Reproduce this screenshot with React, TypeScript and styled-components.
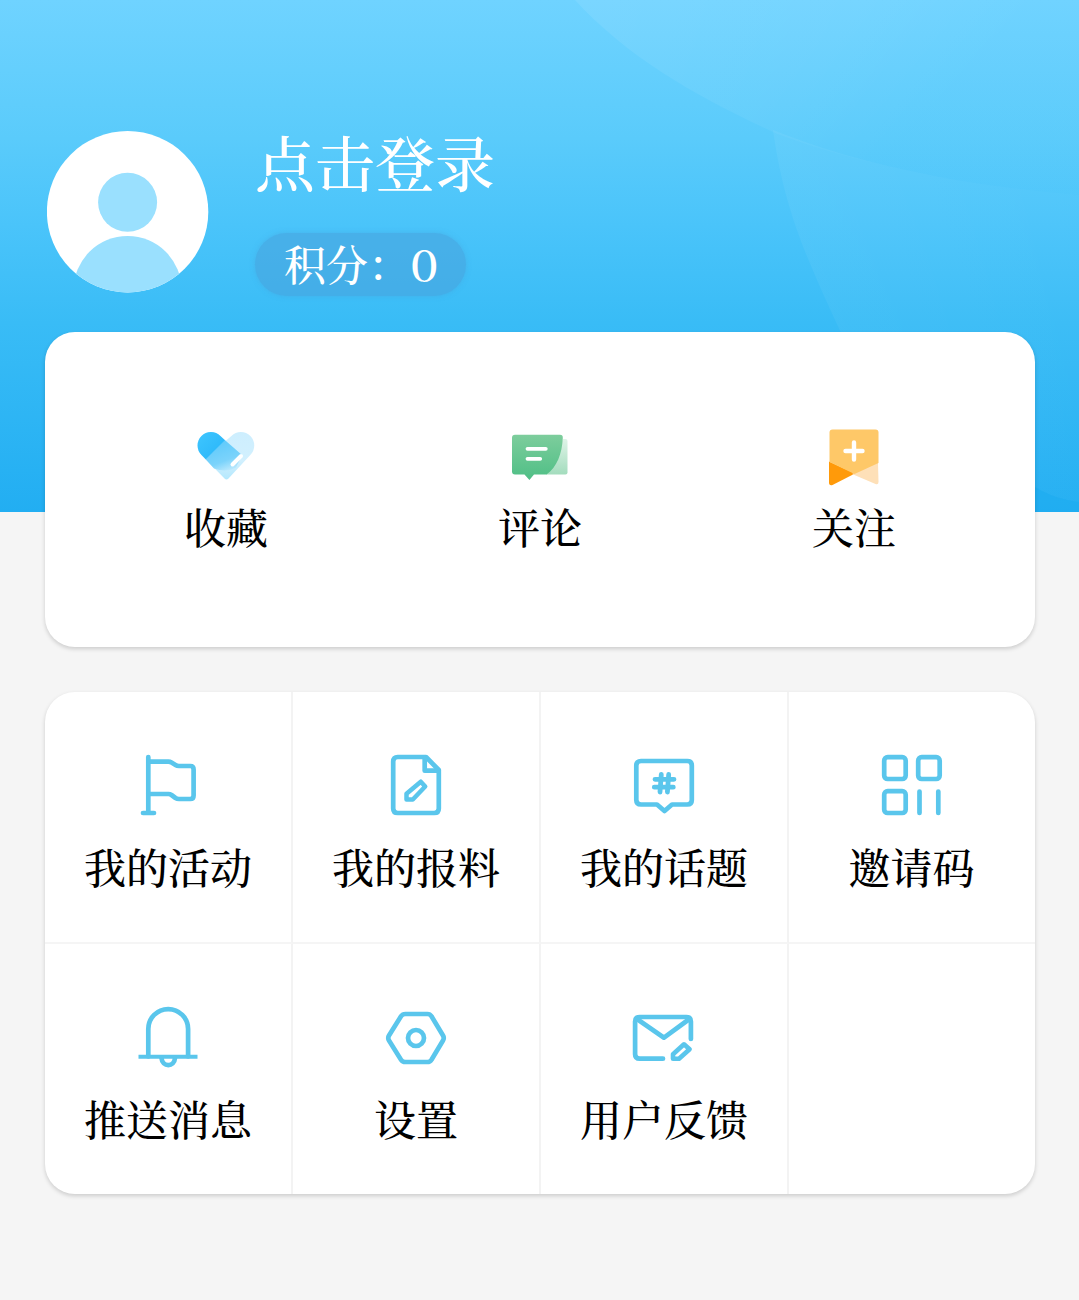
import React from 'react';
import styled, { createGlobalStyle } from 'styled-components';

const GlobalStyle = createGlobalStyle`
  * { box-sizing: border-box; }
  body {
    margin: 0;
    background: #f5f5f5;
    font-family: 'Noto Serif CJK SC', 'Noto Serif SC', 'Source Han Serif SC', 'Songti SC', 'Noto Sans CJK SC', serif;
    font-weight: 500;
    color: #000;
  }
`;

const Page = styled.main`
  width: 1079px;
  min-height: 1300px;
  background: #f5f5f5;
`;

const Hero = styled.header`
  position: relative;
  height: 512px;
  padding: 131px 47px 0;
  background: linear-gradient(180deg, #6fd3ff 0%, #5acbfb 27%, #4ac4fa 44%, #39bcf6 63%, #22aef2 100%);
`;

const HeroArt = styled.svg`
  position: absolute;
  inset: 0;
`;

const Profile = styled.div`
  position: relative;
  display: flex;
  align-items: flex-start;
  gap: 46px;
`;

const Avatar = styled.svg`
  display: block;
  width: 162px;
  height: 162px;
`;

const Account = styled.div`
  display: flex;
  flex-direction: column;
  align-items: flex-start;
`;

const LoginTitle = styled.h1`
  margin: 0;
  padding-bottom: 42px;
  font-size: 60px;
  font-weight: 500;
  line-height: 60px;
  color: #fff;
`;

const Points = styled.div`
  display: flex;
  align-items: center;
  width: 211px;
  height: 63px;
  padding: 0 0 4px 29px;
  border-radius: 32px;
  background: rgba(72, 163, 222, 0.6);
  box-shadow: 0 0 5px rgba(72, 163, 222, 0.5);
  font-size: 42px;
  line-height: 60px;
  color: #fff;
  white-space: nowrap;
`;

const PointsValue = styled.span`
  display: inline-block;
  font-size: 43px;
  transform: scaleX(1.18);
  transform-origin: left center;
`;

const Card = styled.section`
  position: relative;
  width: 990px;
  margin-left: 45px;
  border-radius: 30px;
  background: #fff;
  box-shadow: 0 2px 4px rgba(0, 0, 0, 0.17);
`;

const StatsCard = styled(Card)`
  display: grid;
  grid-template-columns: repeat(3, 314px);
  justify-content: center;
  height: 315px;
  margin-top: -180px;
  padding-top: 92px;
`;

const Stat = styled.div`
  display: flex;
  flex-direction: column;
  align-items: center;
  gap: 8px;
`;

const MenuCard = styled(Card)`
  display: grid;
  grid-template-columns: repeat(3, 248px) 246px;
  grid-template-rows: 252px 250px;
  margin-top: 45px;
`;

const MenuCell = styled.div<{ $right: boolean; $bottom: boolean }>`
  display: flex;
  flex-direction: column;
  align-items: center;
  gap: ${(p) => (p.$bottom ? 19 : 20)}px;
  padding-top: ${(p) => (p.$bottom ? 61 : 60)}px;
  padding-right: ${(p) => (p.$right ? 0 : 1)}px;
  border-right: ${(p) => (p.$right ? '2px solid #f3f3f3' : '0')};
  border-bottom: ${(p) => (p.$bottom ? '2px solid #f5f5f5' : '0')};
`;

const Label = styled.span`
  font-size: 42px;
  line-height: 60px;
  white-space: nowrap;
`;

const Icon = styled.svg`
  display: block;
  flex: none;
  width: 64px;
  height: 64px;
`;

const LineIcon = styled(Icon).attrs({ viewBox: '0 0 64 64' })`
  fill: none;
  stroke: #5ac6ec;
  stroke-width: 4.7;
  stroke-linecap: round;
  stroke-linejoin: round;
`;

const HeartIcon = () => (
  <Icon viewBox="0 0 64 64">
    <defs>
      <linearGradient id="heartDark" x1="0" y1="0" x2="1" y2="1">
        <stop offset="0" stopColor="#3fc6ff" />
        <stop offset="1" stopColor="#27b4f8" />
      </linearGradient>
      <linearGradient id="heartMid" gradientUnits="userSpaceOnUse" x1="24" y1="20" x2="34" y2="46">
        <stop offset="0" stopColor="#62cbfb" />
        <stop offset="0.65" stopColor="#7bd3fb" />
        <stop offset="1" stopColor="#b5e7fd" />
      </linearGradient>
      <linearGradient id="heartPale" x1="0" y1="0" x2="0" y2="1">
        <stop offset="0" stopColor="#cdeefe" />
        <stop offset="0.6" stopColor="#d2f0fe" />
        <stop offset="1" stopColor="#b4e8fd" />
      </linearGradient>
    </defs>
    <path d="M7.500 31A13.200 13.200 0 0 1 26.400 12L31.800 16.800L37.400 12A13.200 13.200 0 0 1 56.300 31L34.500 54.500Q32.500 56.500 30.500 54.500Z" fill="url(#heartPale)" />
    <path d="M11.800 35.500L30.800 16L48 31L42 43.500Q32 49 20 44.500Z" fill="url(#heartMid)" />
    <path d="M11.800 35.500L7.500 31A13.200 13.200 0 0 1 26.400 12L31 16.200Z" fill="url(#heartDark)" />
    <path d="M38.500 40.500L47 32" stroke="#fff" strokeWidth="4" strokeLinecap="round" />
  </Icon>
);

const CommentIcon = () => (
  <Icon viewBox="0 0 64 64">
    <defs>
      <linearGradient id="commentBody" x1="0" y1="0" x2="0" y2="1">
        <stop offset="0" stopColor="#7dcd9c" />
        <stop offset="1" stopColor="#4fbf86" />
      </linearGradient>
      <linearGradient id="commentFold" x1="0" y1="0" x2="0" y2="1">
        <stop offset="0" stopColor="#dff4e8" />
        <stop offset="1" stopColor="#a3dcbd" />
      </linearGradient>
    </defs>
    <path d="M55 15H57.500Q59.500 15 59.500 17V48.500Q59.500 50.500 57.500 50.500H38Z" fill="url(#commentFold)" />
    <path d="M7 10.800H52Q55 10.800 54.800 14C54 30 49 43 38.500 50.500H26L21.400 56L16.500 50.500H7Q4 50.500 4 47.500V13.800Q4 10.800 7 10.800Z" fill="url(#commentBody)" />
    <path d="M19.500 24.800H37.800M19.500 34.800H32.200" stroke="#fff" strokeWidth="3.800" strokeLinecap="round" />
  </Icon>
);

const FollowIcon = () => (
  <Icon viewBox="0 0 64 64">
    <path d="M7 37.500L33 49.500L10.500 61Q7 62 7 58.500Z" fill="#ff9a0a" />
    <path d="M56 38.500L30 50L53.500 60Q56.500 61 56.500 58Z" fill="#fee0b8" />
    <path d="M10.500 5.500H53.500Q56.500 5.500 56.500 8.500V39L32.500 50L7.500 38V8.500Q7.500 5.500 10.500 5.500Z" fill="#fec868" />
    <path d="M32 18.500V35.500M23.500 27H40.500" stroke="#fff" strokeWidth="4.400" strokeLinecap="round" />
  </Icon>
);

const FlagIcon = () => (
  <LineIcon>
    <path d="M12.300 4V60M7 60H18" />
    <path d="M12.300 8.700H32.500Q34 8.700 35.500 9.600L39.500 12Q41 13 43 13H54.300Q57.600 13 57.600 16.500V42.500Q57.600 46 54.300 46H43Q41 46 39.500 45L35.500 42Q34 41 32.500 41H12.300" />
  </LineIcon>
);

const ReportIcon = () => (
  <LineIcon>
    <path d="M42 4H13.700Q9.200 4 9.200 8.500V55.500Q9.200 60 13.700 60H50.300Q54.800 60 54.800 55.500V17Z" />
    <path d="M40.700 5V17.700H54" />
    <path d="M36.800 28.700L41.200 33.500L28.800 46.500H22.500V40.800Z" strokeWidth="4.500" />
  </LineIcon>
);

const TopicIcon = () => (
  <LineIcon>
    <path d="M9 8H55.300Q59.800 8 59.800 12.500V47Q59.800 51.500 55.300 51.500H40L32.500 58L25 51.500H9Q4.300 51.500 4.300 47V12.500Q4.300 8 9 8Z" />
    <path d="M29.300 21.500L28 39M36.700 21.500L35.400 39M23 26.300H42M22.300 34.200H41.300" strokeWidth="4.800" />
  </LineIcon>
);

const InviteIcon = () => (
  <LineIcon>
    <rect x="4.200" y="4.200" width="21.500" height="21.800" rx="3.500" />
    <rect x="38.200" y="4.200" width="21.500" height="21.800" rx="3.500" />
    <rect x="4.200" y="38.200" width="21.500" height="21.800" rx="3.500" />
    <path d="M39.500 38.500V60M58.300 38.500V60" />
  </LineIcon>
);

const BellIcon = () => (
  <LineIcon>
    <path d="M12.300 52.500V25A19.900 19.900 0 0 1 52.100 25V52.500" />
    <path d="M4.500 52.700H59.500" strokeLinecap="square" strokeWidth="4" />
    <path d="M25.500 54C26.300 63.500 38.300 63.500 39 54" />
  </LineIcon>
);

const SettingsIcon = () => (
  <LineIcon>
    <path d="M21.500 10H43.500Q46 10 47.500 12.300L59 31.500Q60.500 34 59 36.500L47.500 55.700Q46 58 43.500 58H21.500Q18.500 58 17 55.700L5 36.500Q3.500 34 5 31.500L17 12.300Q18.500 10 21.500 10Z" />
    <circle cx="32" cy="34" r="8" />
  </LineIcon>
);

const FeedbackIcon = () => (
  <LineIcon>
    <path d="M31 54.700H7.700Q3.100 54.700 3.100 50.200V17.500Q3.100 13 7.700 13H54.400Q58.900 13 58.900 17.500V35" />
    <path d="M5.700 15.500L32 33.700L56.700 15.500" />
    <path d="M52 40.300L57.600 45.200L47 54.700H41V50.300Z" strokeWidth="4.600" />
  </LineIcon>
);

const stats = [
  { label: '收藏', Glyph: HeartIcon },
  { label: '评论', Glyph: CommentIcon },
  { label: '关注', Glyph: FollowIcon },
];

const menu = [
  { label: '我的活动', Glyph: FlagIcon },
  { label: '我的报料', Glyph: ReportIcon },
  { label: '我的话题', Glyph: TopicIcon },
  { label: '邀请码', Glyph: InviteIcon },
  { label: '推送消息', Glyph: BellIcon },
  { label: '设置', Glyph: SettingsIcon },
  { label: '用户反馈', Glyph: FeedbackIcon },
  null,
];

export default function App() {
  return (
    <Page>
      <GlobalStyle />
      <Hero>
        <HeroArt width="1079" height="512" viewBox="0 0 1079 512">
          <defs>
            <linearGradient id="beam" x1="0" y1="0" x2="1" y2="0.35">
              <stop offset="0" stopColor="#fff" stopOpacity="0.08" />
              <stop offset="0.5" stopColor="#fff" stopOpacity="0.05" />
              <stop offset="0.8" stopColor="#fff" stopOpacity="0.01" />
            </linearGradient>
            <linearGradient id="wave" x1="0" y1="0" x2="1" y2="0">
              <stop offset="0" stopColor="#fff" stopOpacity="0.05" />
              <stop offset="1" stopColor="#fff" stopOpacity="0.02" />
            </linearGradient>
          </defs>
          <path d="M575 0C630 60 700 98 775 133C860 165 960 185 1079 195V0Z" fill="url(#beam)" />
          <path d="M773 130C785 215 810 265 842 335L900 512H1079V195C960 185 860 165 773 130Z" fill="url(#wave)" />
          <path d="M1035 487C1050 496 1064 500 1079 502V512H1035Z" fill="#1cabf0" fillOpacity="0.6" />
        </HeroArt>
        <Profile>
          <Avatar viewBox="0 0 162 162">
            <defs>
              <clipPath id="avatarClip">
                <circle cx="80.600" cy="80.700" r="80.700" />
              </clipPath>
            </defs>
            <circle cx="80.600" cy="80.700" r="80.700" fill="#fff" />
            <g clipPath="url(#avatarClip)" fill="#9ae0fe">
              <circle cx="80.600" cy="71.300" r="29.500" />
              <circle cx="80.600" cy="159" r="54" />
            </g>
          </Avatar>
          <Account>
            <LoginTitle>点击登录</LoginTitle>
            <Points>
              积分：<PointsValue>0</PointsValue>
            </Points>
          </Account>
        </Profile>
      </Hero>
      <StatsCard>
        {stats.map(({ label, Glyph }) => (
          <Stat key={label}>
            <Glyph />
            <Label>{label}</Label>
          </Stat>
        ))}
      </StatsCard>
      <MenuCard>
        {menu.map((item, i) => (
          <MenuCell key={i} $right={i % 4 < 3} $bottom={i < 4}>
            {item && (
              <>
                <item.Glyph />
                <Label>{item.label}</Label>
              </>
            )}
          </MenuCell>
        ))}
      </MenuCard>
    </Page>
  );
}
